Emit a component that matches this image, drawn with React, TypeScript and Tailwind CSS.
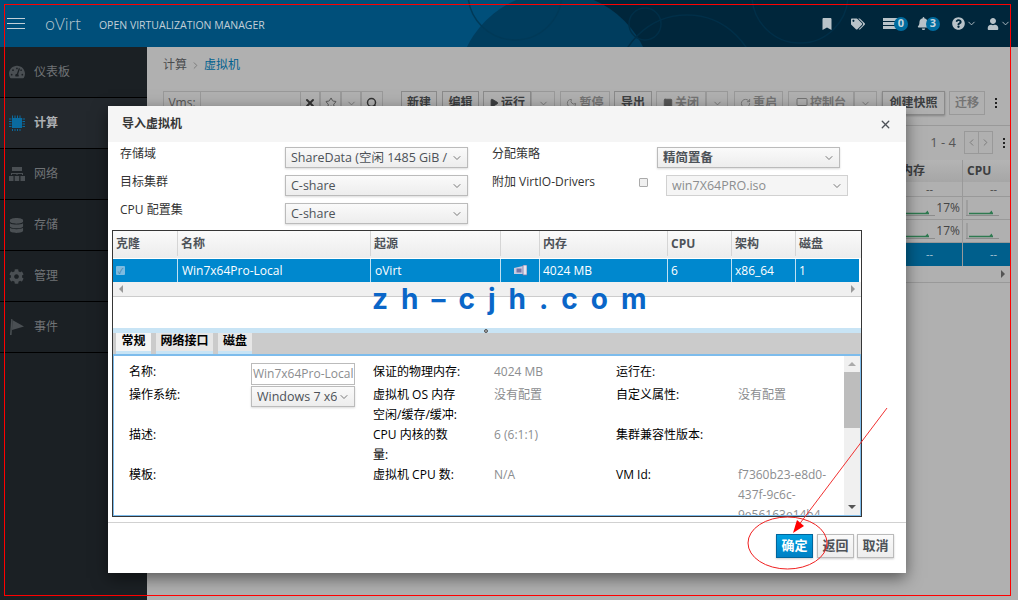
import type { ReactNode } from 'react'
import { ChevronDown, ChevronLeft, ChevronRight, Star, Search, X, Play, Moon, Square, RotateCw, Monitor } from 'lucide-react'
import { FaBell, FaBookmark, FaCog, FaDatabase, FaQuestionCircle, FaTags, FaTachometerAlt, FaUser } from 'react-icons/fa'

function ChipIcon() {
  return (
    <svg width="16" height="16" viewBox="0 0 16 16" fill="none">
      <rect x="3" y="3" width="10" height="10" fill="currentColor" />
      <path d="M3.5 0.5V16M6 0.5V16M8.5 0.5V16M11 0.5V16M0 4H16M0 6.5H16M0 9H16M0 11.5H16" stroke="currentColor" strokeWidth="1" strokeDasharray="2.5 11" />
    </svg>
  )
}

function NetworkIcon() {
  return (
    <svg width="16" height="14" viewBox="0 0 16 14" fill="currentColor">
      <rect x="3" y="0" width="10" height="4" />
      <path d="M2 8V6h12v2h-1V7H8.5v1h-1V7H3v1z" />
      <rect x="0" y="9" width="4.5" height="5" />
      <rect x="5.7" y="9" width="4.5" height="5" />
      <rect x="11.5" y="9" width="4.5" height="5" />
    </svg>
  )
}

function FlagIcon() {
  return (
    <svg width="16" height="16" viewBox="0 0 16 16" fill="currentColor">
      <path d="M1 16L2.2 0H3.4L2.6 16z" />
      <path d="M3.4 1L15 7.5L3 11z" />
    </svg>
  )
}

function TaskBars() {
  return (
    <svg width="15" height="11" viewBox="0 0 15 11" fill="currentColor">
      <rect x="0" y="0" width="15" height="3" />
      <rect x="0" y="4" width="15" height="3" />
      <rect x="0" y="8" width="15" height="3" />
    </svg>
  )
}

const NAV = [
  { label: '仪表板', icon: <FaTachometerAlt size={16} /> },
  { label: '计算', icon: <ChipIcon />, active: true },
  { label: '网络', icon: <NetworkIcon /> },
  { label: '存储', icon: <FaDatabase size={15} /> },
  { label: '管理', icon: <FaCog size={15} /> },
  { label: '事件', icon: <FlagIcon /> },
]

const COLUMNS = ['克隆', '名称', '起源', '', '内存', 'CPU', '架构', '磁盘']

function Header() {
  return (
    <header className="relative flex h-[47px] shrink-0 items-center overflow-hidden bg-[#004f7a]">
      {/* 배경 원 장식 */}
      <svg className="absolute inset-0" width="1018" height="47" fill="none">
        <rect x="555" y="0" width="463" height="47" fill="#00263b" />
        <circle cx="555" cy="90" r="98" fill="#003d5e" />
        <circle cx="515" cy="-7" r="47" stroke="#003a58" strokeWidth="1.5" />
        <circle cx="645" cy="24" r="16" stroke="#002f48" strokeWidth="1.5" />
        <circle cx="687" cy="85" r="70" stroke="#002f48" strokeWidth="1.5" />
        <circle cx="800" cy="-5" r="48" stroke="#002f48" strokeWidth="1.5" />
      </svg>
      <div className="relative flex w-full items-center">
        <div className="ml-[7px] flex w-[18px] flex-col gap-[4px]">
          <span className="h-[1px] bg-[#c3d0d8]" />
          <span className="h-[1px] bg-[#c3d0d8]" />
          <span className="h-[1px] bg-[#c3d0d8]" />
        </div>
        <span className="ml-[20px] text-[17px] font-light text-[#b4c4ce]">oVirt</span>
        <span className="ml-[18px] mt-[4px] text-[10.5px] text-[#c3d0d8]">OPEN VIRTUALIZATION MANAGER</span>
        <div className="ml-auto flex items-center pr-[7px] text-[#b9c3c9]">
          <FaBookmark size={12} className="mr-[18px]" />
          <FaTags size={14} className="mr-[18px]" />
          <TaskBars />
          <span className="ml-[-4px] flex h-[14px] w-[14px] items-center justify-center rounded-full bg-[#006c9f] text-[11px] font-bold text-[#c9d6dd]">0</span>
          <FaBell size={13} className="ml-[9px]" />
          <span className="ml-[-4px] flex h-[14px] w-[14px] items-center justify-center rounded-full bg-[#006c9f] text-[11px] font-bold text-[#c9d6dd]">3</span>
          <FaQuestionCircle size={13} className="ml-[12px]" />
          <ChevronDown size={11} className="ml-[1px]" />
          <FaUser size={12} className="ml-[10px]" />
          <ChevronDown size={11} className="ml-[1px]" />
        </div>
      </div>
    </header>
  )
}

function Sidebar() {
  return (
    <nav className="w-[147px] shrink-0 bg-[#1b2024]">
      {NAV.map((n) => (
        <div
          key={n.label}
          className={`flex h-[51px] items-center border-b border-black pl-[9px] text-[12px] ${n.active ? 'bg-[#23282d] font-bold text-[#adb0b3]' : 'text-[#707376]'}`}
        >
          <span className={`flex w-[25px] ${n.active ? 'text-[#0a6a9e]' : 'text-[#4a4f53]'}`}>{n.icon}</span>
          {n.label}
        </div>
      ))}
    </nav>
  )
}

function ToolBtn({ className, children, strong }: { className: string; children: ReactNode; strong?: boolean }) {
  return (
    <div className={`flex h-[24px] items-center justify-center gap-[2px] border text-[12px] font-bold ${strong ? 'border-[#8a8a8a] text-[#3c3e40]' : 'border-[#999] text-[#747474]'} ${className}`}>
      {children}
    </div>
  )
}

function Toolbar() {
  return (
    <div className="flex items-start border-b border-[#999] pb-[10px]">
      <div className="flex w-[38px] h-[24px] items-center justify-center border border-[#999] text-[12px] text-[#555]">Vms:</div>
      <div className="h-[24px] w-[99px] border-y border-[#999]" />
      <ToolBtn className="w-[20px] text-[#333]"><X size={12} strokeWidth={4} className="text-[#333]" /></ToolBtn>
      <ToolBtn className="w-[21px]"><Star size={12} className="text-[#555]" /></ToolBtn>
      <ToolBtn className="w-[20px]"><ChevronDown size={11} /></ToolBtn>
      <ToolBtn className="w-[22px]"><Search size={12} strokeWidth={3} className="text-[#333]" /></ToolBtn>
      <ToolBtn strong className="ml-[18px] w-[36px]">新建</ToolBtn>
      <ToolBtn strong className="ml-[5px] w-[37px]">编辑</ToolBtn>
      <ToolBtn strong className="ml-[4px] w-[48px]"><Play size={10} fill="#3c3e40" />运行</ToolBtn>
      <ToolBtn className="w-[24px]"><ChevronDown size={11} /></ToolBtn>
      <ToolBtn className="ml-[5px] w-[50px]"><Moon size={11} />暂停</ToolBtn>
      <ToolBtn strong className="ml-[4px] w-[38px]">导出</ToolBtn>
      <ToolBtn className="ml-[4px] w-[50px]"><Square size={10} fill="#555" className="text-[#555]" />关闭</ToolBtn>
      <ToolBtn className="w-[22px]"><ChevronDown size={11} /></ToolBtn>
      <ToolBtn className="ml-[6px] w-[49px]"><RotateCw size={11} />重启</ToolBtn>
      <ToolBtn className="ml-[5px] w-[66px]"><Monitor size={12} />控制台</ToolBtn>
      <ToolBtn className="w-[23px]"><ChevronDown size={11} /></ToolBtn>
      <ToolBtn strong className="ml-[5px] w-[63px] shadow-[0_1px_2px_rgba(0,0,0,0.25)]">创建快照</ToolBtn>
      <ToolBtn className="ml-[4px] w-[36px]">迁移</ToolBtn>
      <div className="ml-[10px] flex h-[24px] flex-col items-center justify-center gap-[2px]">
        <span className="h-[2px] w-[2px] bg-[#222]" />
        <span className="h-[2px] w-[2px] bg-[#222]" />
        <span className="h-[2px] w-[2px] bg-[#222]" />
      </div>
    </div>
  )
}

function Spark({ width, axis }: { width: number; axis?: boolean }) {
  return (
    <svg width={width} height="18" viewBox={`0 0 ${width} 18`} fill="none" className="shrink-0">
      {axis && <path d="M1 1V16" stroke="#8c8c8c" />}
      <path d={`M0 16.5H${width}`} stroke="#8c8c8c" />
      <path d={`M${axis ? 3 : 0} 14.5H${width - 6}`} stroke="#2f7a50" strokeWidth="1.5" />
      <path d={`M${width - 10} 14.5l2.5 -3 1.5 3z`} fill="#2f7a50" />
    </svg>
  )
}

function VmRow() {
  return (
    <div className="flex h-[23px] border-b border-[#999]">
      <div className="flex-1" />
      <div className="flex w-[66px] items-center justify-end border-r border-[#999] pr-[2px] text-[12px] text-[#444]">
        <Spark width={36} />
        <span className="ml-[1px]">17%</span>
      </div>
      <div className="flex w-[48px] items-center overflow-hidden pl-[3px]">
        <Spark width={33} axis />
      </div>
    </div>
  )
}

function BackgroundPage() {
  return (
    <main className="flex min-w-0 flex-1 flex-col bg-[#b0b0b0] px-[7px] pl-[16px]">
      <div className="flex h-[36px] items-center text-[12px] text-[#4a4c4e]">
        计算
        <ChevronRight size={11} className="mx-[3px] text-[#777]" />
        <span className="text-[#00618f]">虚拟机</span>
      </div>
      <div className="mt-[8px]">
        <Toolbar />
      </div>
      <div className="flex h-[34px] items-start justify-end pt-[5px] text-[13px] text-[#555]">
        <span className="mr-[8px] flex h-[23px] items-center">1 - 4</span>
        <div className="flex h-[23px] w-[29px] border border-[#999] text-[#777]">
          <span className="flex flex-1 items-center justify-center border-r border-[#999]"><ChevronLeft size={11} /></span>
          <span className="flex flex-1 items-center justify-center"><ChevronRight size={11} /></span>
        </div>
        <div className="ml-[10px] mr-[6px] flex h-[23px] flex-col items-center justify-center gap-[2px]">
          <span className="h-[2px] w-[2px] bg-[#222]" />
          <span className="h-[2px] w-[2px] bg-[#222]" />
          <span className="h-[2px] w-[2px] bg-[#222]" />
        </div>
      </div>
      <div className="flex flex-col">
        <div className="flex h-[22px] bg-gradient-to-b from-[#b4b4b4] to-[#a6a6a6] text-[12px] font-bold text-[#3c3e40]">
          <div className="flex-1" />
          <div className="flex w-[66px] items-center border-r border-[#999] pl-[4px]">内存</div>
          <div className="flex w-[48px] items-center pl-[4px]">CPU</div>
        </div>
        <div className="flex h-[15px] border-b border-[#999] text-[11px] text-[#444]">
          <div className="flex-1" />
          <div className="flex w-[66px] items-center justify-center border-r border-[#999]">--</div>
          <div className="flex w-[48px] items-center pl-[27px]">--</div>
        </div>
        <VmRow />
        <VmRow />
        <div className="flex h-[23px] bg-[#005f8c] text-[11px] text-[#b0c8d6]">
          <div className="flex-1" />
          <div className="flex w-[66px] items-center justify-center border-r border-[#999]">--</div>
          <div className="flex w-[48px] items-center pl-[27px]">--</div>
        </div>
        <div className="flex h-[17px] items-center justify-end border-b border-[#999] pr-[6px]">
          <span className="h-0 w-0 border-y-[4px] border-l-[4px] border-y-transparent border-l-[#555]" />
        </div>
      </div>
    </main>
  )
}

function Select({ text, className, bold, disabled }: { text: string; className: string; bold?: boolean; disabled?: boolean }) {
  return (
    <div
      className={`flex h-[21px] items-center border pl-[5px] pr-[4px] pt-[1px] text-[12.5px] ${className} ${
        disabled
          ? 'border-[#d1d1d1] bg-[#f5f5f5] text-[#8b8d8f]'
          : 'border-[#bbb] bg-gradient-to-b from-[#fafafa] to-[#ededed] text-[#4d5258] shadow-[0_1px_2px_rgba(0,0,0,0.15)]'
      } ${bold ? 'font-bold' : ''}`}
    >
      <span className="min-w-0 flex-1 overflow-hidden whitespace-nowrap">{text}</span>
      <ChevronDown size={12} className="ml-[1px] shrink-0 text-[#777]" />
    </div>
  )
}

function FormRows() {
  return (
    <div className="flex flex-col gap-[7px] pl-[12px] pt-[5px] text-[12px] text-[#333]">
      <div className="flex h-[21px]">
        <span className="w-[165px] leading-[14px]">存储域</span>
        <Select text="ShareData (空闲 1485 GiB /" className="w-[183px]" />
        <span className="ml-[24px] w-[165px] leading-[14px]">分配策略</span>
        <Select text="精简置备" className="w-[183px]" bold />
      </div>
      <div className="flex h-[21px]">
        <span className="w-[165px] leading-[14px]">目标集群</span>
        <Select text="C-share" className="w-[183px]" />
        <span className="ml-[24px] w-[147px] leading-[14px]">附加 VirtIO-Drivers</span>
        <span className="mt-[3px] h-[9px] w-[9px] rounded-[1px] border border-[#aaa] bg-[#f0f0f0]" />
        <Select text="win7X64PRO.iso" className="ml-[18px] w-[182px]" disabled />
      </div>
      <div className="flex h-[21px]">
        <span className="w-[165px] leading-[14px]">CPU 配置集</span>
        <Select text="C-share" className="w-[183px]" />
      </div>
    </div>
  )
}

function ImportTable() {
  return (
    <div className="text-[12px]">
      <div className="grid h-[27px] grid-cols-[65px_193px_130px_39px_128px_64px_64px_64px] bg-gradient-to-b from-[#fafafa] to-[#ececec] pb-[2px] font-bold text-[#4d5258]">
        {COLUMNS.map((c, i) => (
          <div key={i} className="flex items-center border-r border-[#d5d5d5] pl-[3px] last:border-r-0">{c}</div>
        ))}
      </div>
      <div className="mr-[2px] mt-[1px] grid h-[23px] grid-cols-[65px_193px_130px_39px_128px_64px_64px_64px] bg-[#0088ce] text-white">
        <div className="flex items-center border-r border-[#bfe0f2] pl-[3px]">
          <span className="flex h-[9px] w-[9px] items-center justify-center rounded-[1px] bg-[#7dbbe0] text-[8px] leading-none text-[#3d7ea6]">✓</span>
        </div>
        <div className="flex items-center border-r border-[#bfe0f2] pl-[4px]">Win7x64Pro-Local</div>
        <div className="flex items-center border-r border-[#bfe0f2] pl-[4px]">oVirt</div>
        <div className="flex items-center justify-center border-r border-[#bfe0f2]">
          <svg width="13" height="11" viewBox="0 0 13 11">
            <path d="M0 3l9-2v8H0z" fill="#c9cbe0" />
            <rect x="2.5" y="3.5" width="5" height="4" fill="#7476a8" />
            <path d="M9 0h4v10H9z" fill="#e4e5ef" stroke="#7476a8" strokeWidth="0.8" />
          </svg>
        </div>
        <div className="flex items-center border-r border-[#bfe0f2] pl-[3px]">4024 MB</div>
        <div className="flex items-center border-r border-[#bfe0f2] pl-[3px]">6</div>
        <div className="flex items-center border-r border-[#bfe0f2] pl-[3px]">x86_64</div>
        <div className="flex items-center pl-[3px]">1</div>
      </div>
      <div className="flex h-[15px] items-center justify-between border-b border-[#ccc] bg-[#f0f0f0] px-[6px]">
        <span className="h-0 w-0 border-y-[4px] border-r-[4px] border-y-transparent border-r-[#999]" />
        <span className="h-0 w-0 border-y-[4px] border-l-[4px] border-y-transparent border-l-[#999]" />
      </div>
      <div className="h-[31px]" />
      <div className="flex h-[5px] justify-center bg-[#c8e4f5] pr-[3px]">
        <span className="mt-[1px] h-[4px] w-[4px] rounded-full border border-[#555] bg-[#aaa]" />
      </div>
      <div className="flex h-[21px] gap-[5px] bg-[#cbcbcb] pl-[3px] font-bold text-black">
        <span className="flex w-[35px] items-center justify-center border-b-[3px] border-[#c8e4f5] bg-[#f4f4f4] pb-[2px]">常规</span>
        <span className="flex w-[57px] items-center justify-center border-b-[3px] border-[#c8e4f5] bg-[#e6e6e6] pb-[2px]">网络接口</span>
        <span className="flex w-[34px] items-center justify-center border-b-[3px] border-[#c8e4f5] bg-[#e6e6e6] pb-[2px]">磁盘</span>
      </div>
    </div>
  )
}

function Label({ children }: { children: ReactNode }) {
  return <div className="pr-[33px] text-black">{children}</div>
}

function Value({ children }: { children?: ReactNode }) {
  return <div className="break-words text-[#8b8d8f]">{children}</div>
}

function DetailPanel() {
  return (
    <div className="flex h-[162px] overflow-hidden border-x border-b border-t-[2px] border-[#7dbcec] text-[12px] leading-[20px]">
      <div className="min-w-0 flex-1 overflow-hidden pl-[15px] pt-[6px]">
        <div className="grid grid-cols-[122px_122px_121px_122px_122px_100px] items-start">
          <Label>名称:</Label>
          <div className="mt-[1px] flex h-[22px] w-[104px] items-center whitespace-nowrap border border-[#bbb] pl-[1px] text-[#8b8d8f]">Win7x64Pro-Local</div>
          <Label>保证的物理内存:</Label>
          <Value>4024 MB</Value>
          <Label>运行在:</Label>
          <Value />

          <Label>操作系统:</Label>
          <Select text="Windows 7 x6" className="mt-[1px] h-[20px] w-[104px]" />
          <Label>虚拟机 OS 内存 空闲/缓存/缓冲:</Label>
          <Value>没有配置</Value>
          <Label>自定义属性:</Label>
          <Value>没有配置</Value>

          <Label>描述:</Label>
          <Value />
          <Label>CPU 内核的数量:</Label>
          <Value>6 (6:1:1)</Value>
          <Label>集群兼容性版本:</Label>
          <Value />

          <Label>模板:</Label>
          <Value />
          <Label>虚拟机 CPU 数:</Label>
          <Value>N/A</Value>
          <Label>VM Id:</Label>
          <Value>f7360b23-e8d0-437f-9c6c-9e56163e14b4</Value>
        </div>
      </div>
      <div className="flex w-[16px] shrink-0 flex-col items-center bg-[#f0f0f0]">
        <span className="mt-[6px] h-0 w-0 border-x-[4px] border-b-[4px] border-x-transparent border-b-[#aaa]" />
        <span className="mt-[6px] h-[56px] w-full bg-[#bdbdbd]" />
        <span className="mt-auto mb-[6px] h-0 w-0 border-x-[4px] border-t-[4px] border-x-transparent border-t-[#555]" />
      </div>
    </div>
  )
}

function ImportDialog() {
  return (
    <div className="absolute left-[108px] top-[106px] z-10 flex h-[467px] w-[798px] flex-col bg-white shadow-[0_5px_15px_rgba(0,0,0,0.5)]">
      <div className="flex h-[36px] shrink-0 items-center justify-between bg-[#f5f5f5] pl-[14px] pr-[14px]">
        <span className="text-[12px] font-bold text-[#363636]">导入虚拟机</span>
        <X size={13} strokeWidth={2.5} className="text-[#4d5258]" />
      </div>
      <FormRows />
      <div className="ml-[4px] mt-[6px] w-[750px] border border-[#363636]">
        <ImportTable />
        <DetailPanel />
      </div>
      <div className="mt-[5px] flex flex-1 justify-end gap-[3px] border-t border-[#d1d1d1] pr-[12px] pt-[11px]">
        <button className="mr-[1px] h-[24px] w-[37px] border border-[#00659c] bg-gradient-to-b from-[#00a1e0] to-[#0080c4] text-[13px] font-bold text-white shadow-[0_1px_2px_rgba(0,0,0,0.2)]">确定</button>
        <button className="h-[24px] w-[37px] border border-[#bbb] bg-gradient-to-b from-[#fafafa] to-[#ededed] text-[13px] font-bold text-[#4d5258] shadow-[0_1px_2px_rgba(0,0,0,0.2)]">返回</button>
        <button className="h-[24px] w-[37px] border border-[#bbb] bg-gradient-to-b from-[#fafafa] to-[#ededed] text-[13px] font-bold text-[#4d5258] shadow-[0_1px_2px_rgba(0,0,0,0.2)]">取消</button>
      </div>
    </div>
  )
}

export default function App() {
  return (
    <div className="relative flex h-[600px] w-[1018px] flex-col overflow-hidden bg-[#b0b0b0] font-['Open_Sans','Noto_Sans_CJK_SC',sans-serif]">
      <Header />
      <div className="flex min-h-0 flex-1">
        <Sidebar />
        <BackgroundPage />
      </div>
      <ImportDialog />

      {/* 워터마크 */}
      <div className="absolute left-[372px] top-[282px] z-20 font-['Inter',sans-serif] text-[28px] font-bold leading-[34px] tracking-[13px] text-[#0a66c8]">
        zh–cjh.com
      </div>

      {/* 빨간 주석 */}
      <svg className="pointer-events-none absolute inset-0 z-30" width="1018" height="600" fill="none">
        <rect x="4.5" y="4.5" width="1006" height="591" stroke="#f00" />
        <ellipse cx="787.5" cy="543" rx="39.5" ry="26" stroke="#f02020" />
        <path d="M887 408L798 526" stroke="#f03030" />
        <path d="M793 533L797 520L804 526Z" fill="#f00" />
      </svg>
    </div>
  )
}
